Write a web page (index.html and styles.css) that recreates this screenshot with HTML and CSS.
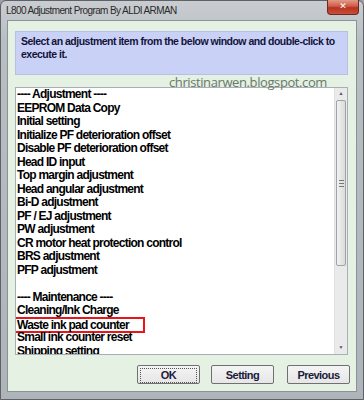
FILE: index.html
```html
<!DOCTYPE html>
<html lang="en">
<head>
    <meta charset="UTF-8">
    <title>L800 Adjustment Program</title>
    <link rel="stylesheet" href="styles.css">
</head>
<body>
    <div class="window">
        <div class="titlebar">
            <span class="title">L800 Adjustment Program By ALDI ARMAN</span>
            <span class="close">&#x2715;</span>
        </div>
        <div class="client">
            <div class="message">Select an adjustment item from the below window and double-click to execute it.</div>
            <div class="listwrap">
                <div class="watermark">christinarwen.blogspot.com</div>
                <div class="listbox">
                    <ul class="items">
                        <li>---- Adjustment ----</li>
                        <li>EEPROM Data Copy</li>
                        <li>Initial setting</li>
                        <li>Initialize PF deterioration offset</li>
                        <li>Disable PF deterioration offset</li>
                        <li>Head ID input</li>
                        <li>Top margin adjustment</li>
                        <li>Head angular adjustment</li>
                        <li>Bi-D adjustment</li>
                        <li>PF / EJ adjustment</li>
                        <li>PW adjustment</li>
                        <li>CR motor heat protection control</li>
                        <li>BRS adjustment</li>
                        <li>PFP adjustment</li>
                        <li>&nbsp;</li>
                        <li>---- Maintenance ----</li>
                        <li>Cleaning/Ink Charge</li>
                        <li><span class="marked">Waste ink pad counter</span></li>
                        <li>Small ink counter reset</li>
                        <li>Shipping setting</li>
                    </ul>
                    <div class="scrollbar">
                        <div class="arrow">&#9650;</div>
                        <div class="thumb"><span class="grip"></span></div>
                        <div class="track"></div>
                        <div class="arrow">&#9660;</div>
                    </div>
                </div>
            </div>
            <div class="buttons">
                <button class="focused"><span>OK</span></button>
                <button><span>Setting</span></button>
                <button><span>Previous</span></button>
            </div>
        </div>
    </div>
</body>
</html>
```

FILE: styles.css
```css
body {
    margin: 0;
    width: 364px;
    height: 400px;
    overflow: hidden;
    background-color: #9ea3a8;
}
.window {
    height: 400px;
    box-sizing: border-box;
    padding: 0 6px 7px 6px;
    border: 1px solid #5d6266;
    border-radius: 6px 6px 0 0;
    background: linear-gradient(to bottom, #c9cdd1 0, #b9bec3 40px, #aeb4b9 100%);
    display: flex;
    flex-direction: column;
}
.titlebar {
    height: 19px;
    display: flex;
    justify-content: space-between;
    align-items: flex-start;
}
.title {
    font-family: "Liberation Sans", Arial, sans-serif;
    font-size: 10px;
    letter-spacing: -0.6px;
    color: #2a2a2a;
    padding-top: 4px;
    margin-left: -1px;
}
.close {
    width: 30px;
    height: 14px;
    margin-right: -2px;
    margin-top: -1px;
    border: 1px solid #6b2a22;
    border-top: none;
    border-radius: 0 0 4px 4px;
    background: linear-gradient(to bottom, #e29b8a 0, #cf5a44 45%, #b7321e 55%, #c8503a 100%);
    color: #fff;
    font-family: "DejaVu Sans", sans-serif;
    font-weight: bold;
    font-size: 9px;
    line-height: 13px;
    text-align: center;
}
.client {
    flex: 1;
    background-color: #e4f1e3;
    border: 1px solid #8b9196;
    padding: 10px 8px 0 7px;
    display: flex;
    flex-direction: column;
}
.message {
    height: 44px;
    box-sizing: border-box;
    background-color: #c9d1f7;
    border: 1px solid #b7bfe4;
    padding: 3px 4px 0 5px;
    font-family: "Liberation Sans", Arial, sans-serif;
    font-weight: bold;
    font-size: 10.5px;
    letter-spacing: -0.5px;
    line-height: 13px;
    color: #14143a;
}
.listwrap {
    position: relative;
    margin-top: 12px;
}
.watermark {
    position: absolute;
    right: 21px;
    top: -13px;
    font-family: "Open Sans", sans-serif;
    font-size: 13px;
    letter-spacing: -0.4px;
    line-height: 16px;
    color: #6a786a;
}
.listbox {
    height: 268px;
    box-sizing: border-box;
    background-color: #fff;
    border: 1px solid #a9b0b4;
    display: flex;
    overflow: hidden;
}
.items {
    flex: 1;
    list-style: none;
    margin: 0;
    padding: 0 0 0 1px;
    font-family: "Liberation Sans", Arial, sans-serif;
    font-weight: bold;
    font-size: 12px;
    letter-spacing: -0.75px;
    line-height: 13.5px;
    color: #000;
    white-space: nowrap;
}
.items li {
    height: 13.5px;
}
.marked {
    display: inline-block;
    margin-left: -7px;
    padding: 0 14px 0 5px;
    border: 2px solid #e8161b;
    line-height: 12px;
    margin-top: -1px;
}
.scrollbar {
    width: 12px;
    background-color: #eaeaea;
    border-left: 1px solid #e2e2e2;
    display: flex;
    flex-direction: column;
}
.arrow {
    height: 12px;
    font-size: 5px;
    line-height: 12px;
    text-align: center;
    color: #555;
}
.thumb {
    height: 164px;
    margin: 0 1px;
    border: 1px solid #9da3a6;
    border-radius: 2px;
    background: linear-gradient(to right, #f2f2f2, #dadada);
    display: flex;
    align-items: center;
    justify-content: center;
}
.grip {
    width: 5px;
    height: 5px;
    border-top: 1px solid #777;
    border-bottom: 1px solid #777;
    background: linear-gradient(to bottom, transparent 2px, #777 2px, #777 3px, transparent 3px);
}
.track {
    flex: 1;
}
.buttons {
    display: flex;
    justify-content: flex-end;
    margin-top: 10px;
    margin-right: -2px;
}
.buttons button {
    width: 63px;
    height: 19px;
    margin-left: 11px;
    padding: 2px;
    border: 1px solid #707070;
    border-radius: 2px;
    background: linear-gradient(to bottom, #f4f4f4, #e6e6e6);
    font-family: "Liberation Sans", Arial, sans-serif;
    font-weight: bold;
    font-size: 11px;
    letter-spacing: -0.55px;
    color: #1a1a3a;
}
.buttons button:last-child {
    margin-left: 13px;
}
.buttons button span {
    display: block;
    height: 13px;
    line-height: 13px;
    border: 1px dotted transparent;
}
.buttons button.focused span {
    border-color: #555;
}
```
